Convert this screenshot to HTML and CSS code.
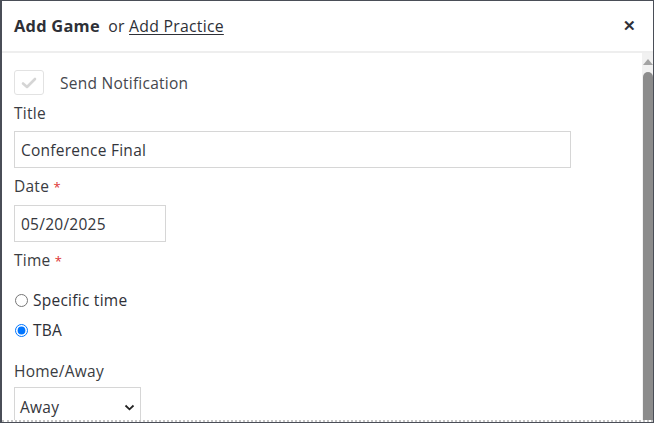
FILE: index.html
```html
<!DOCTYPE html>
<html>
<head>
<meta charset="utf-8">
<link rel="stylesheet" href="styles.css">
</head>
<body>
<div class="frame">
  <div class="header">
    <div class="title"><span class="title-main">Add Game</span> <span class="or">or</span> <a class="alt" href="#">Add Practice</a></div>
    <span class="close">&#x2715;</span>
  </div>
  <div class="body">
    <div class="content">
      <div class="notify">
        <span class="check-box">
          <svg width="16" height="12" viewBox="0 0 16 12"><path d="M2 6.5 L6 10 L14 2" fill="none" stroke="#d5d5d5" stroke-width="2.6" stroke-linecap="round" stroke-linejoin="round"/></svg>
        </span>
        <span class="notify-text">Send Notification</span>
      </div>
      <div class="label">Title</div>
      <div class="input wide">Conference Final</div>
      <div class="label gap">Date <span class="req">*</span></div>
      <div class="input date">05/20/2025</div>
      <div class="label gap">Time <span class="req">*</span></div>
      <label class="radio first"><input type="radio" name="t"> Specific time</label>
      <label class="radio"><input type="radio" name="t" checked> TBA</label>
      <div class="label ha">Home/Away</div>
      <div class="select">
        <span>Away</span>
        <svg width="11" height="7" viewBox="0 0 11 7"><path d="M1.5 1.5 L5.5 5.3 L9.5 1.5" fill="none" stroke="#222" stroke-width="1.8"/></svg>
      </div>
    </div>
    <div class="scrollbar">
      <div class="arrow"></div>
      <div class="thumb"></div>
    </div>
  </div>
</div>
</body>
</html>
```
FILE: styles.css
```css
html, body { margin: 0; padding: 0; background: #fff; }
body { font-family: "Open Sans", "Noto Sans", sans-serif; color: #3a3c42; letter-spacing: 0.25px; }
.frame {
  width: 654px; height: 423px; box-sizing: border-box;
  border: 1px solid #4a4e57; border-left-width: 2px;
  display: flex; flex-direction: column; overflow: hidden;
}
.header {
  height: 52px; flex: none; box-sizing: border-box;
  border-bottom: 2px solid #eeeeee;
  display: flex; align-items: center; justify-content: space-between;
  padding: 0 17px 2px 12px;
}
.title { font-size: 15.8px; color: #2e3037; }
.title-main { font-weight: 700; font-size: 16.4px; margin-right: 4px; }
.alt { color: #2e3037; text-decoration: underline; text-underline-offset: 2px; }
.close { font-size: 15px; font-weight: 700; color: #2e3037; }
.body {
  flex: 1; display: flex; min-height: 0;
  border-bottom: 2px dotted #c4c4c4;
}
.content { flex: 1; padding: 17px 0 0 12px; overflow: hidden; }
.notify { display: flex; align-items: center; height: 25px; }
.check-box {
  width: 28px; height: 23px; border: 1px solid #e2e2e2; border-radius: 3px;
  display: flex; align-items: center; justify-content: center;
}
.notify-text { margin-left: 16px; font-size: 15.5px; color: #45474d; }
.label { font-size: 15.5px; line-height: 20px; margin-top: 8px; margin-bottom: 8px; color: #3a3c42; }
.label.gap { margin-top: 8px; }
.req { color: #d33; font-size: 13px; }
.input {
  box-sizing: border-box; height: 37px; border: 1px solid #d6d6d6;
  padding: 1px 6px 0; display: flex; align-items: center; font-size: 15.5px; color: #34363c;
}
.input.wide { width: 557px; }
.input.date { width: 152px; }
.radio { display: flex; align-items: center; height: 20px; font-size: 15.5px; color: #2e3037; }
.radio input { margin: 0 5px 0 1px; width: 13px; height: 13px; }
.radio.first { margin-top: 19px; margin-bottom: 10px; }
.label.ha { margin-top: 21px; margin-bottom: 6px; }
.select {
  box-sizing: border-box; width: 127px; height: 38px; border: 1px solid #d6d6d6;
  display: flex; align-items: center; justify-content: space-between;
  padding: 2px 5px 0 5px; font-size: 15.5px; color: #34363c;
}
.scrollbar { width: 11px; flex: none; background: #f1f1f1; display: flex; flex-direction: column; align-items: center; }
.arrow {
  margin-top: 6px; width: 0; height: 0;
  border-left: 5px solid transparent; border-right: 5px solid transparent;
  border-bottom: 6px solid #a3a3a3;
}
.thumb { margin-top: 7px; width: 10px; flex: 1; background: #8c8c8c; border-radius: 5px 5px 0 0; }
```
